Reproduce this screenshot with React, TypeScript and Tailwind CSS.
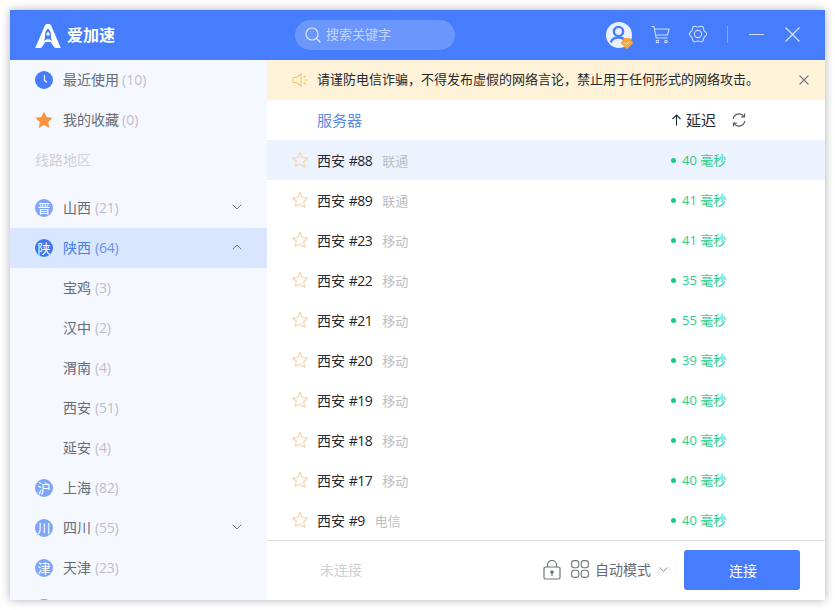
import { ChevronDown, ChevronUp } from "lucide-react";

const font = "font-['Open_Sans','Noto_Sans_CJK_SC',sans-serif]";

const gearPath = (() => {
  const pts: string[] = [];
  for (let i = 0; i <= 96; i++) {
    const a = (i / 96) * Math.PI * 2;
    const r = 7.8 + 0.8 * Math.cos(6 * a);
    pts.push(`${(9 + r * Math.cos(a)).toFixed(2)} ${(9 + r * Math.sin(a)).toFixed(2)}`);
  }
  return "M" + pts.join("L") + "Z";
})();

function Badge({ t, active }: { t?: string; active?: boolean }) {
  return (
    <span
      className={`flex h-[18px] w-[18px] shrink-0 items-center justify-center rounded-full text-[13px] leading-none text-white ${
        active ? "bg-[#3f76ee]" : "bg-[#7ea4f8]"
      }`}
    >
      {t}
    </span>
  );
}

function Region({ t, name, n, chev, active }: { t: string; name: string; n: number; chev?: "up" | "down"; active?: boolean }) {
  return (
    <div className={`flex h-10 shrink-0 items-center pl-[25px] pr-[22px] text-sm ${active ? "bg-[#d9e6ff]" : ""}`}>
      <Badge t={t} active={active} />
      <span className={`ml-[10px] ${active ? "text-[#4a7fe8]" : "text-[#666b75]"}`}>{name}</span>
      <span className={`ml-[4px] tracking-[-0.2px] ${active ? "text-[#6a93ea]" : "text-[#bdbfc4]"}`}>({n})</span>
      <span className="flex-1" />
      {chev === "down" && <ChevronDown size={16} strokeWidth={1.3} className="-mt-[2px] text-[#5f646e]" />}
      {chev === "up" && <ChevronUp size={16} strokeWidth={1.3} className="-mt-[2px] text-[#5f646e]" />}
    </div>
  );
}

function City({ name, n }: { name: string; n: number }) {
  return (
    <div className="flex h-10 shrink-0 items-center pl-[53px] text-sm">
      <span className="text-[#666b75]">{name}</span>
      <span className="ml-[4px] tracking-[-0.2px] text-[#bdbfc4]">({n})</span>
    </div>
  );
}

function Star() {
  return (
    <svg width="18" height="18" viewBox="0 0 18 18" className="shrink-0">
      <path
        d="M9 1.600l2.300 4.900 5.200.7-3.800 3.700.95 5.300L9 13l-4.650 2.200.95-5.300L1.500 7.200l5.200-.7z"
        fill="none"
        stroke="#f6d3ab"
        strokeWidth="1.200"
        strokeLinejoin="round"
      />
    </svg>
  );
}

const rows: [string, string, number, boolean?][] = [
  ["#88", "联通", 40, true],
  ["#89", "联通", 41],
  ["#23", "移动", 41],
  ["#22", "移动", 35],
  ["#21", "移动", 55],
  ["#20", "移动", 39],
  ["#19", "移动", 40],
  ["#18", "移动", 40],
  ["#17", "移动", 40],
  ["#9", "电信", 40],
];

function Row({ id, isp, ms, hl }: { id: string; isp: string; ms: number; hl?: boolean }) {
  return (
    <div className={`flex h-10 items-center pl-[24px] text-sm ${hl ? "bg-[#edf3fe]" : ""}`}>
      <Star />
      <span className="ml-[8px] pt-[2px] text-[#23262d]">
        西安 <span className="tracking-[-0.5px]">{id}</span>
      </span>
      <span className="ml-[10px] pt-[2px] text-[13px] text-[#bcbec3]">{isp}</span>
      <span className="flex-1" />
      <span className="flex w-[154px] items-center text-[13px] text-[#2fce8c]">
        <span className="mr-[6px] h-[5px] w-[5px] rounded-full bg-[#1fcb83]" />
        {ms} 毫秒
      </span>
    </div>
  );
}

export default function App() {
  return (
    <div className={`h-[610px] w-[835px] overflow-hidden bg-white p-[10px] pb-0 ${font}`}>
      <div className="flex h-[590px] w-[815px] flex-col overflow-hidden bg-white shadow-[0_0_9px_rgba(0,0,0,0.3)]">
        <header className="flex h-[50px] shrink-0 items-center bg-[#467dfc] pl-[25px] pr-[25px] text-white">
          <svg width="26" height="24" viewBox="0 0 26 24" className="mt-[2px]">
            <path
              fill="#fff"
              fillRule="evenodd"
              d="M10 1.200C10.600.4 11.500 0 13 0s2.400.4 3 1.200L25.800 24H20l-2.800-3.400-1.400-2.600h-5.600l-1.400 2.600L6 24H.2zM13 4.500c-2.200 1.800-3.400 4.500-3 8.500l-.8 4 2.400-1.800h2.800l2.400 1.800-.8-4c.4-4-.8-6.700-3-8.500z"
            />
            <circle cx="13" cy="10" r="1.700" fill="#fff" />
          </svg>
          <span className="ml-[6px] w-[48px] text-base font-bold leading-none">爱加速</span>
          <div className="ml-[180px] flex h-[30px] w-[160px] items-center rounded-full bg-[#6b97fc] pl-[10px]">
            <svg width="16" height="16" viewBox="0 0 16 16" fill="none" stroke="#dbe6ff" strokeWidth="1.200">
              <circle cx="7" cy="7" r="6" />
              <path d="M11.500 11.500l3.500 3.500" strokeLinecap="round" />
            </svg>
            <span className="ml-[5px] text-[13px] text-[#c2d5fe]">搜索关键字</span>
          </div>
          <span className="flex-1" />
          <div className="relative h-[26px] w-[26px] rounded-full bg-[#eaf0fe]">
            <svg width="26" height="26" viewBox="0 0 26 26" fill="none" stroke="#467dfc" strokeWidth="2.400">
              <circle cx="12.500" cy="9.500" r="4.600" />
              <path d="M4.800 20.500c1.200-3.600 4-5 7.700-5s6.500 1.400 7.700 5" />
            </svg>
            <svg width="14" height="14" viewBox="0 0 14 14" className="absolute -bottom-[2px] -right-[2px]">
              <path d="M7 13.500L.8 7 4 2h6l3.200 5z" fill="#f5a73b" />
              <path d="M4.500 6.500l2 2 3-3" fill="none" stroke="#fde3b0" strokeWidth="1" />
            </svg>
          </div>
          <svg className="ml-[19px] -mt-[1px]" width="19" height="19" viewBox="0 0 19 19" fill="none" stroke="#cfdcff" strokeWidth="1.100">
            <path d="M.5 1.500h2.500l2.200 11.500h11.300M3.700 4H18l-1.500 6H5" />
            <circle cx="6.500" cy="16.500" r="1.300" />
            <circle cx="15" cy="16.500" r="1.300" />
          </svg>
          <svg className="ml-[19px] -mt-[2px]" width="18" height="18" viewBox="0 0 18 18" fill="none" stroke="#cfdcff" strokeWidth="1.100">
            <path d={gearPath} />
            <circle cx="9" cy="9" r="3.600" />
          </svg>
          <span className="ml-[20px] -mt-[2px] h-[17px] w-px bg-[#7fa5fc]" />
          <span className="ml-[21px] -mt-[2px] h-px w-[15px] bg-[#cfdcff]" />
          <svg className="ml-[21px] -mt-[2px]" width="15" height="15" viewBox="0 0 15 15" stroke="#dbe6ff" strokeWidth="1.100">
            <path d="M.5.500l14 14M14.500.500l-14 14" />
          </svg>
        </header>
        <div className="flex min-h-0 flex-1">
          <aside className="flex w-[257px] shrink-0 flex-col overflow-hidden bg-[#f5f8ff]">
            <div className="flex h-10 shrink-0 items-center pl-[25px] text-sm">
              <svg width="18" height="18" viewBox="0 0 18 18" className="shrink-0">
                <circle cx="9" cy="9" r="9" fill="#467dfc" />
                <path d="M9.500 4.500V9.500l2 1.500" fill="none" stroke="#fff" strokeWidth="1.200" strokeLinecap="round" />
              </svg>
              <span className="ml-[10px] text-[#666b75]">最近使用</span>
              <span className="ml-[3px] text-[#bdbfc4]">(10)</span>
            </div>
            <div className="flex h-10 shrink-0 items-center pl-[25px] text-sm">
              <svg width="18" height="18" viewBox="0 0 18 18" className="shrink-0">
                <path d="M9 .500l2.600 5.500 6 .8-4.400 4.200 1.100 6L9 14l-5.300 3 1.100-6L.4 6.800l6-.8z" fill="#fb923c" />
              </svg>
              <span className="ml-[10px] text-[#666b75]">我的收藏</span>
              <span className="ml-[3px] text-[#bdbfc4]">(0)</span>
            </div>
            <div className="flex h-10 shrink-0 items-center pl-[25px] text-sm text-[#cfd1d5]">线路地区</div>
            <div className="h-2 shrink-0" />
            <Region t="晋" name="山西" n={21} chev="down" />
            <Region t="陕" name="陕西" n={64} chev="up" active />
            <City name="宝鸡" n={3} />
            <City name="汉中" n={2} />
            <City name="渭南" n={4} />
            <City name="西安" n={51} />
            <City name="延安" n={4} />
            <Region t="沪" name="上海" n={82} />
            <Region t="川" name="四川" n={55} chev="down" />
            <Region t="津" name="天津" n={23} />
            <div className="flex h-10 shrink-0 items-center pl-[25px]">
              <Badge />
            </div>
          </aside>
          <main className="flex min-w-0 flex-1 flex-col">
            <div className="flex h-10 shrink-0 items-center bg-[#fef2d9] pl-[25px] pr-[16px] text-[13px] text-[#26282d]">
              <svg width="16" height="16" viewBox="0 0 16 16" fill="none" stroke="#f6c766" strokeWidth="1.100" className="shrink-0">
                <path d="M1 5.500h3.500L9 2v12L4.500 10.500H1zM11.500 5.500l2.500-1.500M12 8h3M11.500 10.500l2.500 1.500" />
              </svg>
              <span className="ml-[9px]">请谨防电信诈骗，不得发布虚假的网络言论，禁止用于任何形式的网络攻击。</span>
              <span className="flex-1" />
              <svg width="10" height="10" viewBox="0 0 10 10" stroke="#777c85" strokeWidth="1.100">
                <path d="M.5.500l9 9M9.500.500l-9 9" />
              </svg>
            </div>
            <div className="flex h-10 shrink-0 items-center pl-[50px] text-[15px]">
              <span className="text-[#5d8ae6]">服务器</span>
              <span className="flex-1" />
              <span className="flex w-[154px] items-center text-[#23262d]">
                <svg width="11" height="12" viewBox="0 0 11 12" fill="none" stroke="#23262d" strokeWidth="1.100">
                  <path d="M5.500 11.500V1M1.500 5l4-4 4 4" />
                </svg>
                <span className="ml-[4px]">延迟</span>
                <svg className="ml-[15px]" width="16" height="16" viewBox="0 0 16 16" fill="none" stroke="#55585f" strokeWidth="1.200">
                  <path d="M2.200 7A6 6 0 0 1 13 4.500M13.800 9A6 6 0 0 1 3 11.500" />
                  <path d="M13.500 1.500v3.300h-3.300M2.500 14.500v-3.300h3.300" />
                </svg>
              </span>
            </div>
            <div className="flex flex-col border-b border-[#dfdfdf]">
              {rows.map(([id, isp, ms, hl]) => (
                <Row key={id} id={id} isp={isp} ms={ms} hl={hl} />
              ))}
            </div>
            <div className="flex min-h-0 flex-1 items-start pl-[53px] pr-[25px]">
              <span className="mt-[19px] text-sm text-[#cfd1d5]">未连接</span>
              <span className="flex-1" />
              <svg width="18" height="20" viewBox="0 0 18 20" fill="none" stroke="#70757f" strokeWidth="1.200" className="mr-[10px] mt-[19px]">
                <rect x="1" y="7" width="16" height="12" rx="1.500" />
                <path d="M4.500 7V5a4.500 4.500 0 0 1 9 0v2" />
                <circle cx="9" cy="12" r="1.200" fill="#70757f" />
                <path d="M9 13v3" />
              </svg>
              <svg width="18" height="18" viewBox="0 0 18 18" fill="none" stroke="#70757f" strokeWidth="1.100" className="mt-[19px]">
                <rect x=".6" y=".6" width="7.200" height="7.200" rx="2.500" />
                <rect x="10.200" y=".6" width="7.200" height="7.200" rx="2.500" />
                <rect x=".6" y="10.200" width="7.200" height="7.200" rx="2.500" />
                <rect x="10.200" y="10.200" width="7.200" height="7.200" rx="2.500" />
              </svg>
              <span className="ml-[6px] mt-[19px] text-sm text-[#666b75]">自动模式</span>
              <ChevronDown size={15} strokeWidth={1.300} className="ml-[5px] mt-[21px] text-[#70757f]" />
              <button className="ml-[13px] mt-[9px] h-10 w-[116px] rounded-[3px] bg-[#467dfc] pl-[2px] pt-[1px] text-sm text-white">连接</button>
            </div>
          </main>
        </div>
      </div>
    </div>
  );
}
